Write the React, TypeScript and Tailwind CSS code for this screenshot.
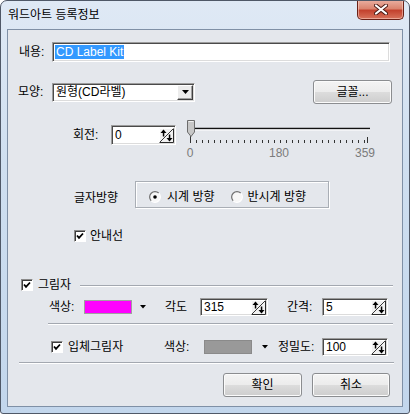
import React from "react";

const field =
  "bg-white border border-t-[#9c9c9c] border-l-[#9c9c9c] border-b-white border-r-white shadow-[inset_1px_1px_0_#4a4a4a,inset_-1px_-1px_0_#dcdcdc]";

const winButton =
  "rounded-[3px] border border-[#8b8d90] bg-[linear-gradient(to_bottom,#f4f4f4_0%,#ececec_48%,#dcdcdc_52%,#cdcdcd_100%)] shadow-[inset_0_0_0_1px_#fbfbfb] flex items-center justify-center leading-none";

function SpinIcon() {
  return (
    <svg width="15" height="15" viewBox="0 0 15 15" className="shrink-0">
      <rect x="0" y="0" width="15" height="15" fill="#f2f2f2" />
      <path d="M0.5 14.5 V0.5 H14.5" fill="none" stroke="#ffffff" />
      <path d="M14.5 0.5 V14.5 H0.5" fill="none" stroke="#2a2a2a" />
      <line x1="1" y1="14" x2="14" y2="1" stroke="#3a3a3a" />
      <path d="M4.5 1.5 L1.5 5 H7.5 Z" fill="#000" />
      <rect x="3.8" y="4.5" width="1.5" height="4" fill="#000" />
      <path d="M10.5 13.5 L7.5 10 H13.5 Z" fill="#000" />
      <rect x="9.8" y="6.5" width="1.5" height="4" fill="#000" />
    </svg>
  );
}

function Spin({ value, w }: { value: string; w: string }) {
  return (
    <div className={`${field} ${w} h-[18px] flex items-center justify-between pl-[3px] pr-[1px]`}>
      <span className="leading-none">{value}</span>
      <SpinIcon />
    </div>
  );
}

function Check() {
  return (
    <div className="w-[12px] h-[12px] shrink-0 bg-white border border-t-[#8a8a8a] border-l-[#8a8a8a] border-b-white border-r-white shadow-[inset_1px_1px_0_#3c3c3c]">
      <svg width="10" height="10" viewBox="0 0 10 10">
        <path d="M2 4.5 L4 6.8 L8 2.5" fill="none" stroke="#000" strokeWidth="1.8" />
      </svg>
    </div>
  );
}

function Radio({ on }: { on?: boolean }) {
  return (
    <svg width="12" height="12" viewBox="0 0 12 12" className="shrink-0">
      <circle cx="6" cy="6" r="5" fill="#f7f7f7" />
      <path d="M2.2 9.8 A5.3 5.3 0 0 1 9.8 2.2" fill="none" stroke="#707070" strokeWidth="1.2" />
      <path d="M9.8 2.2 A5.3 5.3 0 0 1 2.2 9.8" fill="none" stroke="#ffffff" strokeWidth="1.2" />
      {on && <circle cx="6" cy="6" r="1.8" fill="#000" />}
    </svg>
  );
}

function SmallArrow() {
  return (
    <svg width="6" height="4" viewBox="0 0 6 4" className="shrink-0">
      <path d="M0 0 H6 L3 3.5 Z" fill="#000" />
    </svg>
  );
}

function Etched({ className }: { className: string }) {
  return <div className={`${className} h-[2px] border-t border-t-[#a3a8b0] border-b border-b-white`} />;
}

function Slider() {
  const ticks: number[] = [];
  for (let x = 4; x <= 181; x += 6) ticks.push(x);
  return (
    <div className="flex flex-col ml-[10px] w-[200px]">
      <svg width="200" height="26" viewBox="0 0 200 26">
        <line x1="7" y1="10.5" x2="184" y2="10.5" stroke="#111" strokeWidth="1.4" />
        <line x1="7" y1="12" x2="184" y2="12" stroke="#ffffff" strokeWidth="1" />
        {ticks.map((x) => (
          <line key={x} x1={x + 0.5} y1="22" x2={x + 0.5} y2="25" stroke="#333" />
        ))}
        <line x1="4.5" y1="18" x2="4.5" y2="25" stroke="#333" />
        <line x1="181.5" y1="19" x2="181.5" y2="25" stroke="#333" />
        <path d="M1.5 2.5 H8.5 V14 L5 18.5 L1.5 14 Z" fill="#c7c7c7" stroke="#6c6c6c" />
        <path d="M2.5 3.5 H7.5" stroke="#f0f0f0" />
      </svg>
      <div className="flex mt-[2px] leading-[14px] text-[#7b7b7b]">
        <span className="w-[20px] text-center -ml-[6px]">0</span>
        <span className="w-[20px] text-center ml-[69px]">180</span>
        <span className="w-[20px] text-center ml-[66px]">359</span>
      </div>
    </div>
  );
}

export default function App() {
  return (
    <div className="w-[410px] h-[414px] bg-white text-[12px] text-black font-['Liberation_Sans','Noto_Sans_CJK_KR',sans-serif]">
      <div className="w-full h-full flex flex-col border border-[#4f5867] rounded-t-[7px] rounded-b-[3px] bg-[linear-gradient(to_bottom,#dfe9f5_0%,#cfdff0_40%,#c2d6ec_100%)] overflow-hidden">
        {/* title bar */}
        <div className="h-[28px] shrink-0 relative">
          <div className="ml-[7px] mt-[7px] leading-[14px]">워드아트 등록정보</div>
          <div className="absolute top-[-1px] right-[5px] w-[47px] h-[20px] rounded-b-[5px] border border-t-0 border-[#6a2117] bg-[linear-gradient(to_bottom,#eab0a2_0%,#da846f_45%,#c3422e_55%,#d8735c_100%)] shadow-[inset_0_0_0_1px_rgba(255,220,210,0.5)] flex items-center justify-center">
            <svg width="14" height="11" viewBox="0 0 14 11">
              <path d="M2 1.5 L12 9.5 M12 1.5 L2 9.5" stroke="#4a1a14" strokeWidth="4" strokeLinecap="round" />
              <path d="M2 1.5 L12 9.5 M12 1.5 L2 9.5" stroke="#ffffff" strokeWidth="2.2" strokeLinecap="round" />
            </svg>
          </div>
        </div>

        {/* client area */}
        <div className="flex-1 mx-[6px] border border-[#7f90a6] bg-[#e4e7ec] flex flex-col">
          {/* 내용 */}
          <div className="mt-[12px] h-[20px] flex items-center">
            <span className="ml-[11px] w-[33px]">내용:</span>
            <div className={`${field} w-[338px] h-[20px] flex items-center pl-[2px]`}>
              <span className="bg-[#3399ff] text-white leading-[14px] px-[1px]">CD Label Kit</span>
            </div>
          </div>

          {/* 모양 + 글꼴 */}
          <div className="mt-[18px] h-[24px] flex items-center">
            <span className="ml-[10px] w-[34px]">모양:</span>
            <div className={`${field} w-[143px] h-[19px] flex items-center justify-between pl-[3px] pr-[1px]`}>
              <span className="leading-none">원형(CD라벨)</span>
              <div className="w-[16px] h-[15px] bg-[#ececec] border border-t-white border-l-white border-b-[#404040] border-r-[#404040] shadow-[inset_-1px_-1px_0_#a0a0a0] flex items-center justify-center">
                <svg width="7" height="4" viewBox="0 0 7 4">
                  <path d="M0 0 H7 L3.5 4 Z" fill="#000" />
                </svg>
              </div>
            </div>
            <div className={`${winButton} ml-[118px] w-[79px] h-[24px]`}>글꼴...</div>
          </div>

          {/* 회전 */}
          <div className="mt-[14px] flex items-start">
            <div className="mt-[7px] h-[20px] flex items-center">
              <span className="ml-[65px] w-[38px]">회전:</span>
              <div className={`${field} w-[65px] h-[20px] flex items-center justify-between pl-[3px] pr-[1px]`}>
                <span className="leading-none">0</span>
                <SpinIcon />
              </div>
            </div>
            <Slider />
          </div>

          {/* 글자방향 */}
          <div className="mt-[21px] flex items-start">
            <span className="ml-[66px] w-[61px] mt-[10px] leading-[14px]">글자방향</span>
            <div className="w-[194px] h-[27px] border border-[#a9aeb5] shadow-[inset_1px_1px_0_#ffffff,1px_1px_0_#ffffff] flex items-center pt-[5px] pl-[13px]">
              <Radio on />
              <span className="ml-[6px] leading-none">시계 방향</span>
              <span className="ml-[16px]" />
              <Radio />
              <span className="ml-[5px] leading-none">반시계 방향</span>
            </div>
          </div>

          {/* 안내선 */}
          <div className="mt-[22px] h-[12px] flex items-center">
            <div className="ml-[66px]">
              <Check />
            </div>
            <span className="ml-[4px] leading-none">안내선</span>
          </div>

          {/* 그림자 */}
          <div className="mt-[37px] h-[12px] flex items-center">
            <div className="ml-[13px]">
              <Check />
            </div>
            <span className="ml-[5px] leading-none">그림자</span>
            <Etched className="flex-1 ml-[9px] mr-[9px] mt-[2px]" />
          </div>

          <div className="mt-[7px] h-[18px] flex items-center">
            <span className="ml-[41px] w-[35px]">색상:</span>
            <div className="w-[48px] h-[14px] bg-[#ff00ff] border border-[#a0a0a0]" />
            <div className="ml-[8px] w-[5px] flex">
              <SmallArrow />
            </div>
            <span className="ml-[20px] w-[35px]">각도</span>
            <Spin value="315" w="w-[68px]" />
            <span className="ml-[19px] w-[35px]">간격:</span>
            <Spin value="5" w="w-[66px]" />
          </div>

          <Etched className="mt-[7px] ml-[40px] mr-[9px]" />

          {/* 입체그림자 */}
          <div className="mt-[13px] h-[18px] flex items-center">
            <div className="ml-[43px]">
              <Check />
            </div>
            <span className="ml-[5px] w-[96px] leading-none">입체그림자</span>
            <span className="w-[40px]">색상:</span>
            <div className="w-[48px] h-[14px] bg-[#999999] border border-[#8a8a8a]" />
            <div className="ml-[10px] w-[5px] flex">
              <SmallArrow />
            </div>
            <span className="ml-[11px] w-[44px]">정밀도:</span>
            <Spin value="100" w="w-[66px]" />
          </div>

          <Etched className="mt-[6px] ml-[11px] mr-[8px]" />

          {/* buttons */}
          <div className="mt-[9px] h-[24px] flex justify-end mr-[12px]">
            <div className={`${winButton} w-[79px] h-[24px]`}>확인</div>
            <div className={`${winButton} ml-[10px] w-[78px] h-[24px]`}>취소</div>
          </div>
        </div>
        <div className="h-[6px] shrink-0" />
      </div>
    </div>
  );
}
